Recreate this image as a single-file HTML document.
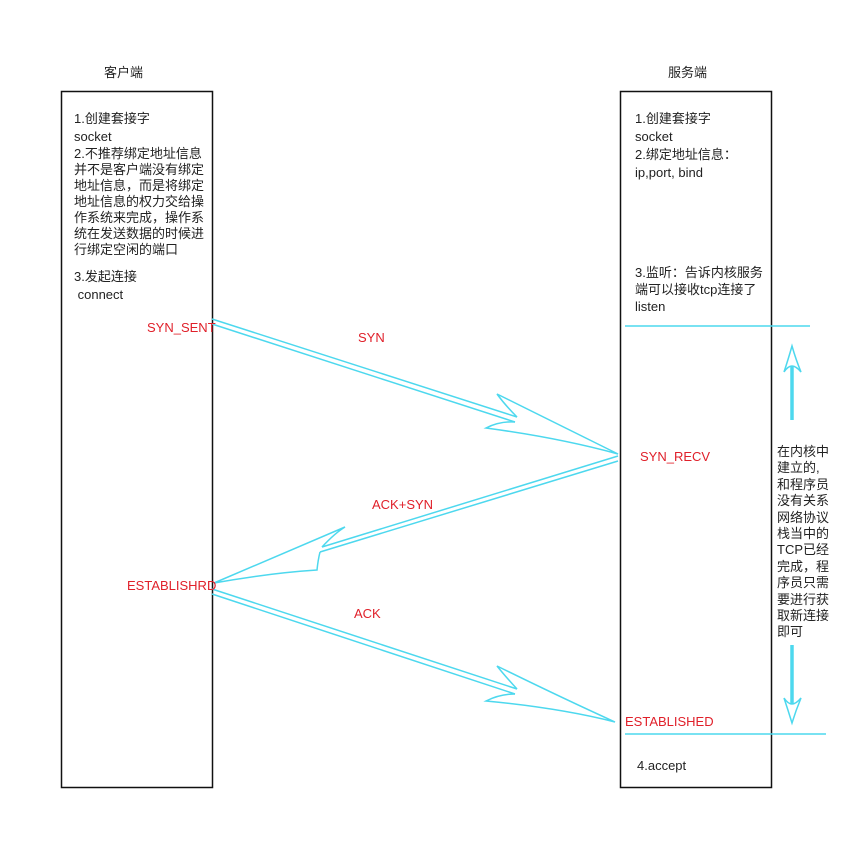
<!DOCTYPE html>
<html><head><meta charset="utf-8"><style>
body{margin:0;width:852px;height:849px;background:#fff;position:relative;overflow:hidden;font-family:"Liberation Sans","Noto Sans CJK SC",sans-serif;font-size:13px;color:#222}
.t{position:absolute;line-height:16px;white-space:nowrap}
.r{color:#e0202a;position:absolute;font-size:13px;white-space:nowrap}
</style></head><body>
<svg width="852" height="849" style="position:absolute;left:0;top:0">
<rect x="61.5" y="91.5" width="151" height="696" fill="none" stroke="#111" stroke-width="1.5"/>
<rect x="620.5" y="91.5" width="151" height="696" fill="none" stroke="#111" stroke-width="1.5"/>
<g stroke="#4dd8ee" stroke-width="1.5" fill="none">
<line x1="625" y1="326" x2="810" y2="326"/>
<line x1="625" y1="734" x2="826" y2="734"/>
<path d="M212 319 L517 417 M212 324 L515 422"/>
<path d="M517 417 Q505 405 497 394 Q560 425 618 454 Q560 438 486 428 Q500 421 515 422"/>
<path d="M618 456 L322 547 M618 461 L320 552"/>
<path d="M322 547 Q335 533 345 527 Q280 555 214 583 Q270 573 317 570 Q318 560 320 552"/>
<path d="M212 589 L517 689 M212 594 L515 694"/>
<path d="M517 689 Q505 676 497 666 Q560 697 615 722 Q560 708 486 701 Q500 694 515 694"/>
<path d="M784 372 Q788 360 792 346 Q796 360 801 372 Q796 366 792 366 Q788 366 784 372"/>
<path d="M784 698 Q788 710 792 723 Q796 710 801 698 Q796 704 792 704 Q788 704 784 698"/>
</g>
<g stroke="#4dd8ee" stroke-width="3.5">
<line x1="792" y1="420" x2="792" y2="366"/>
<line x1="792" y1="645" x2="792" y2="704"/>
</g>
</svg>
<div class="t" style="left:104px;top:65px">客户端</div>
<div class="t" style="left:668px;top:65px">服务端</div>
<div class="t" style="left:74px;top:110px;line-height:18px">1.创建套接字<br>socket</div>
<div class="t" style="left:74px;top:146px">2.不推荐绑定地址信息<br>并不是客户端没有绑定<br>地址信息，而是将绑定<br>地址信息的权力交给操<br>作系统来完成，操作系<br>统在发送数据的时候进<br>行绑定空闲的端口</div>
<div class="t" style="left:74px;top:268px;line-height:18px">3.发起连接<br>&nbsp;connect</div>
<div class="t" style="left:635px;top:110px;line-height:18px">1.创建套接字<br>socket</div>
<div class="t" style="left:635px;top:146px;line-height:18px">2.绑定地址信息：<br>ip,port, bind</div>
<div class="t" style="left:635px;top:264px;line-height:17px">3.监听：告诉内核服务<br>端可以接收tcp连接了<br>listen</div>
<div class="t" style="left:637px;top:758px">4.accept</div>
<div class="t" style="left:777px;top:444px;line-height:16.4px">在内核中<br>建立的,<br>和程序员<br>没有关系<br>网络协议<br>栈当中的<br>TCP已经<br>完成，程<br>序员只需<br>要进行获<br>取新连接<br>即可</div>
<div class="r" style="left:147px;top:320px">SYN_SENT</div>
<div class="r" style="left:358px;top:330px">SYN</div>
<div class="r" style="left:640px;top:449px">SYN_RECV</div>
<div class="r" style="left:372px;top:497px">ACK+SYN</div>
<div class="r" style="left:127px;top:578px">ESTABLISHRD</div>
<div class="r" style="left:354px;top:606px">ACK</div>
<div class="r" style="left:625px;top:714px">ESTABLISHED</div>
</body></html>
